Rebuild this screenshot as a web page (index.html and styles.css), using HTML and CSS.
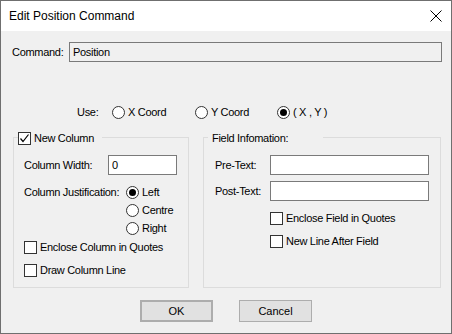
FILE: index.html
```html
<!DOCTYPE html>
<html lang="en">
<head>
    <meta charset="UTF-8">
    <title>Edit Position Command</title>
    <link rel="stylesheet" href="styles.css">
</head>
<body>
<div class="window">
    <div class="titlebar">
        <span class="title">Edit Position Command</span>
        <svg class="close" width="12" height="12" viewBox="0 0 12 12">
            <path d="M0.5 0.5 L11.5 11.5 M11.5 0.5 L0.5 11.5" stroke="#000" stroke-width="1"/>
        </svg>
    </div>
    <div class="content">
        <div class="command-row">
            <span class="command-label">Command:</span>
            <div class="command-box">Position</div>
        </div>

        <div class="use-row">
            <span class="use-label">Use:</span>
            <span class="option opt-x"><span class="radio"></span>X Coord</span>
            <span class="option opt-y"><span class="radio"></span>Y Coord</span>
            <span class="option"><span class="radio checked"></span>( X , Y )</span>
        </div>

        <div class="groups">
            <div class="group group-left">
                <div class="legend legend-left"><span class="check checked"><svg width="11" height="11" viewBox="0 0 11 11"><path d="M1.5 5.5 L4 8.5 L9.5 1.5" fill="none" stroke="#000" stroke-width="1.2"/></svg></span>New Column</div>
                <div class="row first">
                    <span class="label lbl-width">Column Width:</span>
                    <input class="field width-field" value="0">
                </div>
                <div class="just-row">
                    <span class="label lbl-just">Column Justification:</span>
                    <div class="radio-list">
                        <span class="option"><span class="radio checked"></span>Left</span>
                        <span class="option"><span class="radio"></span>Centre</span>
                        <span class="option"><span class="radio"></span>Right</span>
                    </div>
                </div>
                <div class="option cb enclose-col"><span class="check"></span>Enclose Column in Quotes</div>
                <div class="option cb draw-line"><span class="check"></span>Draw Column Line</div>
            </div>

            <div class="group group-right">
                <div class="legend legend-right">Field Infomation:</div>
                <div class="row first">
                    <span class="label lbl-text">Pre-Text:</span>
                    <input class="field text-field" value="">
                </div>
                <div class="row second">
                    <span class="label lbl-text">Post-Text:</span>
                    <input class="field text-field" value="">
                </div>
                <div class="option cb enclose-field"><span class="check"></span>Enclose Field in Quotes</div>
                <div class="option cb new-line"><span class="check"></span>New Line After Field</div>
            </div>
        </div>

        <div class="buttons">
            <button class="btn btn-ok">OK</button>
            <button class="btn">Cancel</button>
        </div>
    </div>
</div>
</body>
</html>
```

FILE: styles.css
```css
body {
    margin: 0;
    padding: 0;
    font-family: "Liberation Sans", Arial, sans-serif;
    font-size: 11px;
    letter-spacing: -0.3px;
    color: #000;
}
.window {
    width: 452px;
    height: 334px;
    box-sizing: border-box;
    border: 1px solid #6f6f6f;
    background-color: #f0f0f0;
    overflow: hidden;
}
.titlebar {
    height: 30px;
    background-color: #fff;
    display: flex;
    align-items: center;
    justify-content: space-between;
    padding: 0 9px 0 8px;
}
.title {
    font-family: "Liberation Sans", Arial, sans-serif;
    font-size: 12px;
    letter-spacing: 0;
    color: #000;
}
.close {
    display: block;
}
.content {
    padding: 11px 9px 0 11px;
}

/* command */
.command-row {
    display: flex;
    align-items: center;
    height: 20px;
}
.command-label {
    width: 57px;
}
.command-box {
    flex: 1;
    height: 20px;
    box-sizing: border-box;
    border: 1px solid #7a7a7a;
    background-color: #f0f0f0;
    padding-left: 3px;
    line-height: 18px;
}

/* use row */
.use-row {
    display: flex;
    align-items: center;
    height: 18px;
    margin-top: 41px;
}
.use-label {
    width: 35px;
    margin-left: 65px;
}
.option {
    display: flex;
    align-items: center;
    height: 18px;
}
.opt-x {
    width: 83px;
}
.opt-y {
    width: 82px;
}
.radio {
    width: 13px;
    height: 13px;
    box-sizing: border-box;
    border: 1px solid #333;
    border-radius: 50%;
    background-color: #fff;
    margin-right: 3px;
    display: flex;
    align-items: center;
    justify-content: center;
}
.radio.checked::after {
    content: '';
    width: 7px;
    height: 7px;
    border-radius: 50%;
    background-color: #000;
}
.check {
    width: 13px;
    height: 13px;
    box-sizing: border-box;
    border: 1px solid #333;
    background-color: #fff;
    margin-right: 3px;
    display: flex;
    align-items: center;
    justify-content: center;
}
.check svg {
    display: block;
}

/* group boxes */
.groups {
    display: flex;
    gap: 14px;
    margin-top: 16px;
    margin-left: 1px;
}
.group {
    position: relative;
    height: 151px;
    box-sizing: border-box;
    border: 1px solid #dcdcdc;
}
.group-left {
    width: 176px;
    padding-left: 10px;
}
.group-right {
    width: 238px;
    padding-left: 11px;
}
.legend {
    position: absolute;
    top: -9px;
    height: 18px;
    display: flex;
    align-items: center;
    background-color: #f0f0f0;
}
.legend-left {
    left: 4px;
    width: 84px;
}
.legend-right {
    left: 4px;
    width: 111px;
    padding-left: 4px;
}
.row {
    display: flex;
    align-items: center;
    height: 20px;
}
.row.first {
    margin-top: 17px;
}
.row.second {
    margin-top: 6px;
}
.lbl-width {
    width: 84px;
}
.lbl-text {
    width: 55px;
}
.field {
    height: 20px;
    box-sizing: border-box;
    border: 1px solid #7a7a7a;
    background-color: #fff;
    padding: 0 3px;
    margin: 0;
    font-family: "Liberation Sans", Arial, sans-serif;
    font-size: 11px;
    color: #000;
    outline: none;
}
.width-field {
    width: 69px;
}
.text-field {
    width: 159px;
}
.just-row {
    display: flex;
    margin-top: 8px;
}
.lbl-just {
    width: 102px;
    line-height: 18px;
}
.enclose-col {
    margin-top: 1px;
}
.draw-line {
    margin-top: 5px;
}
.enclose-field {
    margin-top: 8px;
    margin-left: 55px;
}
.new-line {
    margin-top: 5px;
    margin-left: 55px;
}

/* buttons */
.buttons {
    display: flex;
    gap: 26px;
    margin-top: 12px;
    margin-left: 128px;
}
.btn {
    width: 73px;
    height: 22px;
    box-sizing: border-box;
    background-color: #e1e1e1;
    border: 1px solid #adadad;
    font-family: "Liberation Sans", Arial, sans-serif;
    font-size: 11px;
    color: #000;
    padding: 0;
    margin: 0;
}
.btn-ok {
    border: 2px solid #adadad;
}
```
